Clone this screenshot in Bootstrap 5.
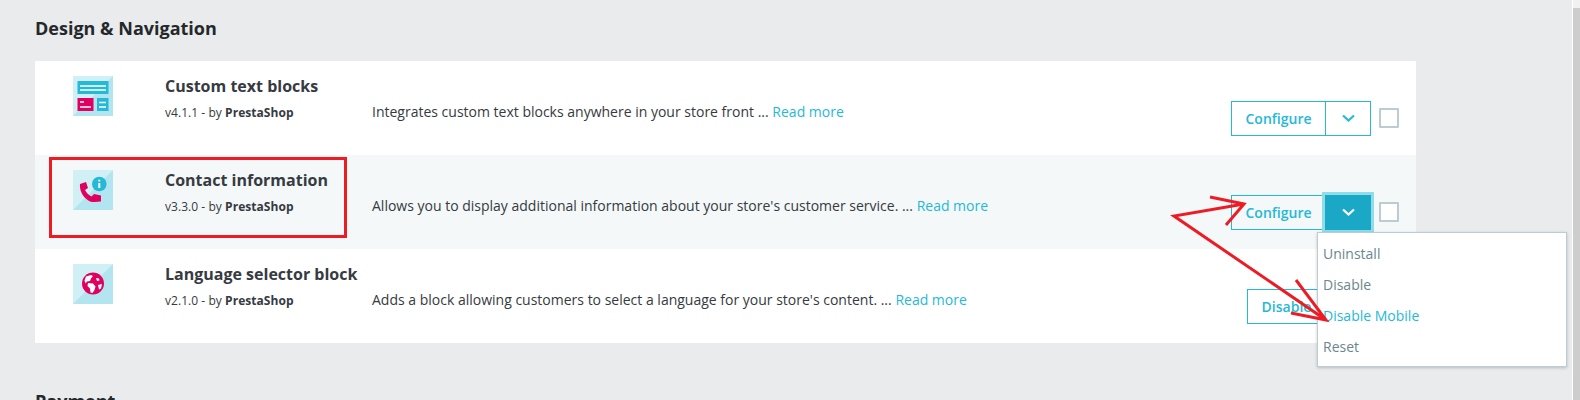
<!DOCTYPE html>
<html lang="en">
<head>
<meta charset="utf-8">
<title>Modules</title>
<link href="https://cdn.jsdelivr.net/npm/bootstrap@5.3.0/dist/css/bootstrap.min.css" rel="stylesheet">
<style>
html,body{height:400px;overflow:hidden}
body{background:#eaebec;font-family:"Open Sans","Liberation Sans",sans-serif;color:#363a41;font-size:14px}
.shell{height:400px;position:relative}
.mainpane{width:1572px;padding:0 156px 0 35px;overflow:hidden}
.sbar{width:8px;border-left:1px solid #fff;background:#f1f1f1}
.sbar-thumb{margin-top:8px;background:#cdcdcd;height:392px}
.sect-title{font-size:18px;font-weight:700;color:#25282b;line-height:24px;margin:0;padding-top:16px;height:61px}
.sect-next{padding-top:46px}
.mod-panel{background:#fff}
.mod-row{height:94px;padding:15px 17px 0 38px}
.mod-row.is-hover{background:#f4f8f9}
.mod-icon{width:40px;height:40px;flex:none;margin-right:52px;display:block}
.mod-id{width:207px;flex:none}
.mod-name{font-size:16px;font-weight:700;line-height:20px;color:#363a41;margin:0 0 8px;white-space:nowrap}
.mod-ver{font-size:12px;line-height:18px;white-space:nowrap;letter-spacing:.05px}
.mod-ver b{font-weight:700}
.mod-desc{padding-top:26px;line-height:20px;white-space:nowrap;flex:1}
.mod-desc a{color:#25b9d7;text-decoration:none}
.mod-acts{padding-top:25px;gap:8px}
.act-group{display:flex;height:35px}
.act-btn{height:35px;border:1px solid #25b9d7;background:transparent;color:#25b9d7;font-size:14px;font-weight:600;line-height:33px;padding:0;text-align:center;border-radius:0}
.act-main{width:95px}
.act-narrow{width:79px}
.act-tog{width:46px;margin-left:-1px;display:flex;align-items:center;justify-content:center}
.act-tog.is-open{background:#1ba8c7;border-color:#1ba8c7;color:#fff;box-shadow:0 0 0 3px #8fdcea;position:relative}
.act-check{width:20px;height:20px;border:2px solid #bbcdd2;border-radius:1px;background:#fff;margin-top:7px;flex:none}
.mod-menu{position:absolute;left:1317px;top:232px;width:250px;height:135px;background:#fff;border:1px solid #bbcdd2;box-shadow:0 1px 3px rgba(0,0,0,.2);padding:5px 0;z-index:3}
.mod-menu-item{display:block;height:31px;line-height:31px;padding-left:5px;color:#6c868e;font-size:14px;text-decoration:none}
.mod-menu-item.menu-on{color:#25b9d7}
.mark-up{position:absolute;left:0;top:0;z-index:5;pointer-events:none}
</style>
</head>
<body>
<div class="shell d-flex">
  <main class="mainpane">
    <h2 class="sect-title">Design &amp; Navigation</h2>
    <div class="mod-panel">
      <div class="mod-row d-flex">
        <svg class="mod-icon" viewBox="0 0 40 40"><rect width="40" height="40" fill="#b3e5f1"/><path d="M0 40V0h40z" fill="#d0f0f6"/><rect x="4.500" y="5" width="31" height="13" fill="#25b9d7"/><path d="M7 10h26M7 14h26" stroke="#fff" stroke-width="1.6"/><rect x="4.500" y="22" width="16" height="13" fill="#e0005f"/><path d="M7 26h4M7 31h11" stroke="#fff" stroke-width="1.6"/><rect x="24" y="22" width="11.500" height="13" fill="#25b9d7"/><path d="M26 26.500h7M26 31h7" stroke="#fff" stroke-width="1.6"/></svg>
        <div class="mod-id">
          <h3 class="mod-name">Custom text blocks</h3>
          <div class="mod-ver">v4.1.1 - by <b>PrestaShop</b></div>
        </div>
        <div class="mod-desc">Integrates custom text blocks anywhere in your store front ... <a href="#">Read more</a></div>
        <div class="mod-acts d-flex">
          <div class="act-group"><button class="act-btn act-main">Configure</button><button class="act-btn act-tog"><svg width="13" height="9" viewBox="0 0 13 9"><path d="M1 1.500l5.500 5 5.500-5" fill="none" stroke="currentColor" stroke-width="2.200"/></svg></button></div>
          <span class="act-check"></span>
        </div>
      </div>
      <div class="mod-row is-hover d-flex">
        <svg class="mod-icon" viewBox="0 0 40 40"><rect width="40" height="40" fill="#b3e5f1"/><path d="M0 40V0h40z" fill="#d0f0f6"/><path d="M7 14l6-2 2 6-3 2c1.500 3 3.500 5 6.500 6.500l2.500-2.500 7 1.500v6l-6 .5C14 33 6 23 7 14z" fill="#e0005f"/><circle cx="26.300" cy="14" r="7.300" fill="#25b9d7"/><path d="M26.300 9.800v1.700M26.300 13v5" stroke="#fff" stroke-width="2"/></svg>
        <div class="mod-id">
          <h3 class="mod-name">Contact information</h3>
          <div class="mod-ver">v3.3.0 - by <b>PrestaShop</b></div>
        </div>
        <div class="mod-desc">Allows you to display additional information about your store's customer service. ... <a href="#">Read more</a></div>
        <div class="mod-acts d-flex">
          <div class="act-group"><button class="act-btn act-main">Configure</button><button class="act-btn act-tog is-open"><svg width="13" height="9" viewBox="0 0 13 9"><path d="M1 1.500l5.500 5 5.500-5" fill="none" stroke="currentColor" stroke-width="2.200"/></svg></button></div>
          <span class="act-check"></span>
        </div>
      </div>
      <div class="mod-row d-flex">
        <svg class="mod-icon" viewBox="0 0 40 40"><rect width="40" height="40" fill="#b3e5f1"/><path d="M0 40V0h40z" fill="#d0f0f6"/><circle cx="20" cy="19.500" r="11" fill="#e0005f"/><path d="M13 12.500l5-1.500 2 1-2 2.500-1 2.500-3 .5-1.500 2-1-3zM15 19l5 .5 2.500 3-1 3.500-2 3-2-.5-.5-4-2.500-2.500zM23 14l3 .5.500 2-2.500.5zM25 21l4-1-1 4.500-2 1z" fill="#fff"/></svg>
        <div class="mod-id">
          <h3 class="mod-name">Language selector block</h3>
          <div class="mod-ver">v2.1.0 - by <b>PrestaShop</b></div>
        </div>
        <div class="mod-desc">Adds a block allowing customers to select a language for your store's content. ... <a href="#">Read more</a></div>
        <div class="mod-acts d-flex">
          <div class="act-group"><button class="act-btn act-narrow">Disable</button><button class="act-btn act-tog"><svg width="13" height="9" viewBox="0 0 13 9"><path d="M1 1.500l5.500 5 5.500-5" fill="none" stroke="currentColor" stroke-width="2.200"/></svg></button></div>
          <span class="act-check"></span>
        </div>
      </div>
    </div>
    <h2 class="sect-title sect-next">Payment</h2>
  </main>
  <div class="sbar"><div class="sbar-thumb"></div></div>
  <div class="mod-menu">
    <a class="mod-menu-item" href="#">Uninstall</a>
    <a class="mod-menu-item" href="#">Disable</a>
    <a class="mod-menu-item menu-on" href="#">Disable Mobile</a>
    <a class="mod-menu-item" href="#">Reset</a>
  </div>
  <svg class="mark-up" width="1580" height="400" fill="none" stroke="#ed1c24">
    <rect x="50.500" y="158.500" width="295" height="78" stroke-width="3"/>
    <path d="M1210 197l34 7-18 21M1244 204l-70 12 152 104M1296 280l30 40-35-7" stroke-width="3"/>
  </svg>
</div>
</body>
</html>
